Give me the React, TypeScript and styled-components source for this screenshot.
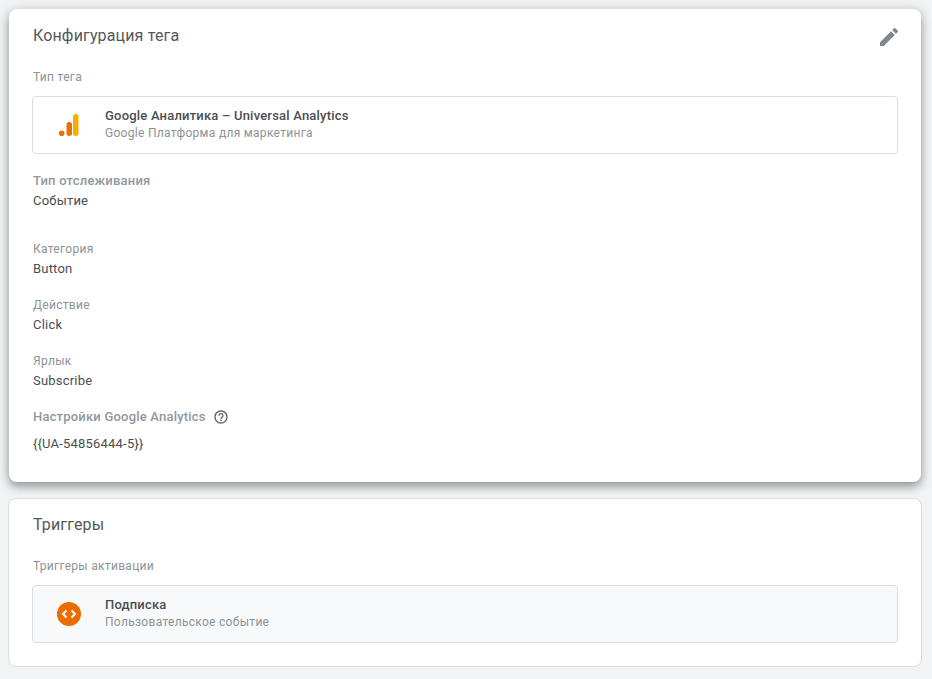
import styled, { createGlobalStyle } from 'styled-components';

const GlobalStyle = createGlobalStyle`
  html, body {
    margin: 0;
    padding: 0;
    height: 100%;
    overflow: hidden;
    background: #f1f3f4;
    font-family: Roboto, "Noto Sans", sans-serif;
  }
`;

const Page = styled.div`
  height: 679px;
  padding: 9px 11px 0 9px;
  box-sizing: border-box;
  display: flex;
  flex-direction: column;
  gap: 16px;
`;

const RaisedCard = styled.section`
  height: 473px;
  box-sizing: border-box;
  position: relative;
  padding: 17px 24px 0;
  background: #fff;
  border-radius: 8px;
  box-shadow: 0 5px 10px rgba(60, 64, 67, 0.45), 0 0 12px rgba(60, 64, 67, 0.15);
`;

const FlatCard = styled.section`
  height: 169px;
  box-sizing: border-box;
  margin: 0 -1px;
  padding: 16px 24px 0;
  background: #fff;
  border: 1px solid #dadce0;
  border-radius: 8px;
`;

const Title = styled.h2`
  margin: 0;
  height: 20px;
  font-size: 16px;
  line-height: 20px;
  font-weight: 400;
  letter-spacing: 0.15px;
  color: #54585c;
`;

const EditButton = styled.button`
  position: absolute;
  top: 16px;
  right: 20px;
  width: 24px;
  height: 24px;
  padding: 0;
  border: 0;
  background: none;
  color: #80868b;
`;

const Label = styled.div<{ $top: number }>`
  margin-top: ${({ $top }) => $top}px;
  font-size: 12px;
  line-height: 16px;
  letter-spacing: 0.3px;
  color: #8d9296;
`;

const StrongLabel = styled.div<{ $top: number }>`
  display: flex;
  align-items: center;
  gap: 7px;
  margin-top: ${({ $top }) => $top}px;
  height: 16px;
  font-size: 13px;
  line-height: 16px;
  font-weight: 500;
  letter-spacing: 0.2px;
  color: #92979b;
`;

const Value = styled.div<{ $top?: number }>`
  margin-top: ${({ $top }) => $top ?? 4}px;
  font-size: 13px;
  line-height: 16px;
  letter-spacing: 0.2px;
  color: #4a4e52;
`;

const Tile = styled.div<{ $muted?: boolean }>`
  display: flex;
  align-items: center;
  height: 58px;
  box-sizing: border-box;
  margin: 11px -1px 0 -1px;
  border: 1px solid #dadce0;
  border-radius: 4px;
  background: ${({ $muted }) => ($muted ? '#f8f9fa' : '#fff')};
`;

const TileIcon = styled.div`
  flex: none;
  width: 72px;
  display: flex;
  justify-content: center;
  align-items: center;
`;

const TileText = styled.div`
  margin-bottom: 2px;
`;

const TileName = styled.div`
  margin-bottom: 1px;
  font-size: 13px;
  line-height: 17px;
  font-weight: 500;
  letter-spacing: 0.2px;
  color: #4a4e52;
`;

const TileType = styled.div`
  font-size: 12px;
  line-height: 17px;
  letter-spacing: 0.3px;
  color: #8d9296;
`;

const AnalyticsLogo = () => (
  <svg width="24" height="24" viewBox="0 0 24 24">
    <rect x="16" y="1" width="5.5" height="22" rx="2.75" fill="#f9ab00" />
    <rect x="9.5" y="9" width="5.5" height="14" rx="2.75" fill="#e37400" />
    <circle cx="4.7" cy="20.2" r="2.8" fill="#e37400" />
  </svg>
);

const CustomEventIcon = () => (
  <svg width="24" height="24" viewBox="0 0 24 24">
    <circle cx="12" cy="12" r="12" fill="#ec6c00" />
    <path d="M9.5 8.5 6 12l3.5 3.5M14.5 8.5 18 12l-3.5 3.5" fill="none" stroke="#fff" strokeWidth="2" />
  </svg>
);

const HelpIcon = () => (
  <svg width="16" height="16" viewBox="0 0 24 24" fill="#5f6368">
    <path d="M11 18h2v-2h-2v2zm1-16C6.48 2 2 6.48 2 12s4.48 10 10 10 10-4.48 10-10S17.52 2 12 2zm0 18c-4.41 0-8-3.59-8-8s3.59-8 8-8 8 3.59 8 8-3.59 8-8 8zm0-14c-2.21 0-4 1.79-4 4h2c0-1.1.9-2 2-2s2 .9 2 2c0 2-3 1.75-3 5h2c0-2.25 3-2.5 3-5 0-2.21-1.79-4-4-4z" />
  </svg>
);

const PencilIcon = () => (
  <svg width="24" height="24" viewBox="0 0 24 24" fill="currentColor">
    <path d="M3 17.25V21h3.75L17.81 9.94l-3.75-3.75L3 17.25zM20.71 7.04a1 1 0 0 0 0-1.41l-2.34-2.34a1 1 0 0 0-1.41 0l-1.83 1.83 3.75 3.75 1.83-1.83z" />
  </svg>
);

export default function App() {
  return (
    <>
      <GlobalStyle />
      <Page>
        <RaisedCard>
          <Title>Конфигурация тега</Title>
          <EditButton aria-label="Изменить">
            <PencilIcon />
          </EditButton>
          <Label $top={23}>Тип тега</Label>
          <Tile>
            <TileIcon>
              <AnalyticsLogo />
            </TileIcon>
            <TileText>
              <TileName>Google Аналитика – Universal Analytics</TileName>
              <TileType>Google Платформа для маркетинга</TileType>
            </TileText>
          </Tile>
          <StrongLabel $top={19}>Тип отслеживания</StrongLabel>
          <Value>Событие</Value>
          <Label $top={32}>Категория</Label>
          <Value>Button</Value>
          <Label $top={20}>Действие</Label>
          <Value>Click</Value>
          <Label $top={20}>Ярлык</Label>
          <Value>Subscribe</Value>
          <StrongLabel $top={20}>
            Настройки Google Analytics
            <HelpIcon />
          </StrongLabel>
          <Value $top={11}>{'{{UA-54856444-5}}'}</Value>
        </RaisedCard>
        <FlatCard>
          <Title>Триггеры</Title>
          <Label $top={23}>Триггеры активации</Label>
          <Tile $muted>
            <TileIcon>
              <CustomEventIcon />
            </TileIcon>
            <TileText>
              <TileName>Подписка</TileName>
              <TileType>Пользовательское событие</TileType>
            </TileText>
          </Tile>
        </FlatCard>
      </Page>
    </>
  );
}
